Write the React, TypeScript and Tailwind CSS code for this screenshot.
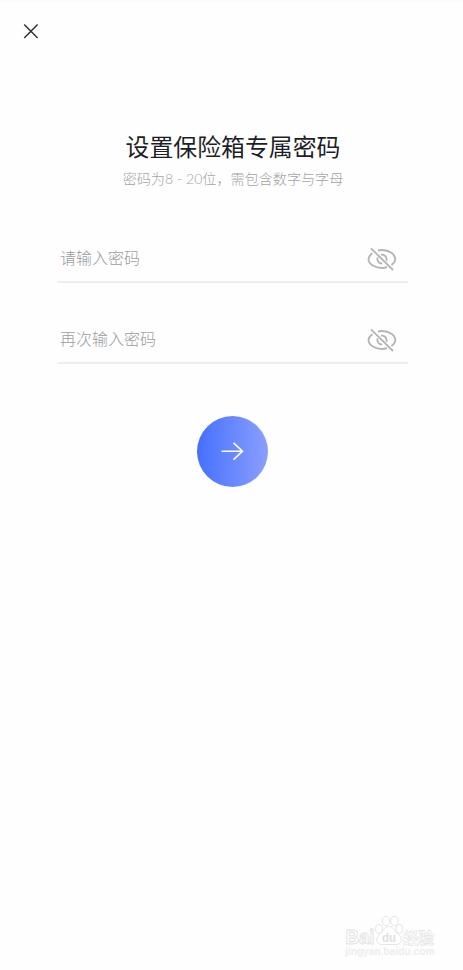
import React from "react";

const EyeOffIcon: React.FC = () => (
    <svg
        width="30"
        height="24"
        viewBox="0 0 30 24"
        fill="none"
        stroke="#b4b4b4"
        strokeWidth="1.8"
    >
        <path d="M4 1.3 L26 23" />
        <path d="M5.4 6.3 C3 8 1.5 10 1.5 12 C1.5 16.6 7.4 21 15 21 C16.8 21 18.5 20.7 20 20.2" />
        <path d="M11 3.5 C12.3 3.2 13.6 3 15 3 C22.4 3 28.3 7.5 28.3 12 C28.3 14.2 26.8 16.3 24.4 17.9" />
        <path d="M14 7.6 C17.2 7.2 19.6 9.4 19.6 12.2 C19.6 12.8 19.5 13.3 19.3 13.8" />
        <path d="M10.5 10.4 C9.7 13.8 11.8 16.6 15.2 16.6" />
    </svg>
);

interface PasswordFieldProps {
    placeholder: string;
}

const PasswordField: React.FC<PasswordFieldProps> = ({
    placeholder
}) => (
    <div className="flex h-[49px] items-start justify-between border-b-2 border-[#eeeeee] pl-[3px] pr-[11px]">
        <span className="mt-3 text-base leading-6 font-light text-[#9c9c9c]">{placeholder}</span>
        <button className="mt-[13px]" aria-label="显示密码">
            <EyeOffIcon />
        </button>
    </div>
);

const Watermark: React.FC = () => (
    <div className="flex w-[90px] flex-col font-[family-name:'Liberation_Sans','Noto_Sans_CJK_SC',sans-serif]">
        <svg className="overflow-visible" width="90" height="32" viewBox="0 0 90 32" fill="#fff" stroke="#e2e2e2" strokeWidth="0.9">
            <ellipse cx="34" cy="15" rx="3.4" ry="4.4" />
            <ellipse cx="41" cy="7" rx="3.7" ry="4.8" />
            <ellipse cx="49.5" cy="7" rx="3.7" ry="4.8" />
            <ellipse cx="54.5" cy="15" rx="3.4" ry="4.4" />
            <path d="M44 12.5 C39 12.5 38 18 34.5 20.5 C30 24 31 30.5 37 30.5 L51 30.5 C57 30.5 58 24 53.5 20.5 C50 18 49 12.5 44 12.5 Z" />
            <text x="0.5" y="30" fontSize="20" fontWeight="700" textLength="29" lengthAdjust="spacingAndGlyphs">Bai</text>
            <text x="37" y="28" fontSize="13" fontWeight="700" textLength="14" lengthAdjust="spacingAndGlyphs" fill="#e0e0e0" stroke="none">du</text>
            <text x="58" y="29.5" fontSize="16" fontWeight="700" textLength="31" lengthAdjust="spacingAndGlyphs" strokeWidth="0.6">经验</text>
        </svg>
        <span className="text-[10.2px] leading-[12px] font-bold whitespace-nowrap text-[#ededed]">jingyan.baidu.com</span>
    </div>
);

const App: React.FC = () => {
    return (
        <div className="flex h-[970px] w-[463px] flex-col overflow-hidden border-t-2 border-[#f8fcff] bg-[#fefefe] font-[family-name:'Lato','Noto_Sans_CJK_SC',sans-serif]">
            <header className="flex h-[58px] items-center pl-[23px]">
                <button aria-label="关闭">
                    <svg width="16" height="16" viewBox="0 0 16 16" stroke="#2b2b30" strokeWidth="1.4">
                        <path d="M1.2 1.5 L14.6 14.9 M14.6 1.5 L1.2 14.9" />
                    </svg>
                </button>
            </header>

            <main className="flex flex-1 flex-col items-center pt-[69px] pl-[2px]">
                <h1 className="pl-px text-[23.9px] leading-9 text-[#1e1e28]">设置保险箱专属密码</h1>
                <p className="mt-1 pl-px text-[14.1px] leading-5 font-light text-[#a4a4a4]">密码为8 - 20位，需包含数字与字母</p>

                <div className="mt-[45px] flex w-[351px] flex-col gap-8">
                    <PasswordField placeholder="请输入密码" />
                    <PasswordField placeholder="再次输入密码" />
                </div>

                <button
                    className="mt-[52px] flex size-[71px] items-center justify-center rounded-full bg-linear-to-r from-[#446fff] to-[#8b9eff]"
                    aria-label="下一步"
                >
                    <svg width="24" height="20" viewBox="0 0 24 20" fill="none" stroke="#fff" strokeWidth="1.6">
                        <path d="M0.5 9.2 H21.5 M12.5 0.8 L21.5 9.2 L12.5 17.6" />
                    </svg>
                </button>
            </main>

            <footer className="flex justify-end pr-7 pb-3">
                <Watermark />
            </footer>
        </div>
    );
};

export default App;
